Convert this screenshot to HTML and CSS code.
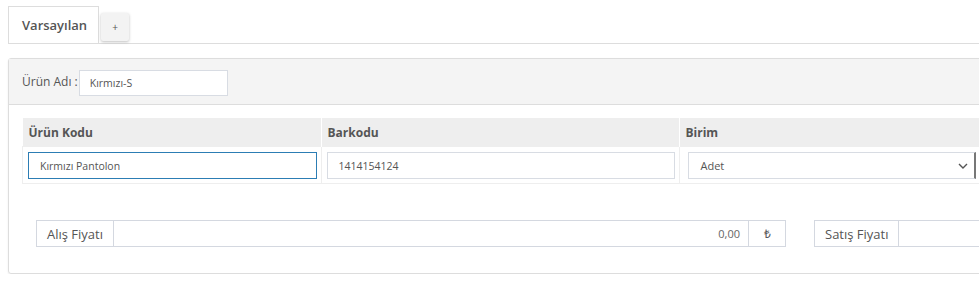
FILE: index.html
```html
<!DOCTYPE html>
<html lang="tr">
<head>
  <meta charset="UTF-8">
  <title>Ürün</title>
  <link rel="stylesheet" href="styles.css">
</head>
<body>

<div class="tabs">
  <div class="tab active">Varsayılan</div>
  <button class="tab-add">+</button>
</div>

<div class="panel">
  <div class="panel-head">
    <label class="name-label">Ürün Adı :</label>
    <input class="name-input" type="text" value="Kırmızı-S">
  </div>
  <div class="panel-body">
    <table class="variant-table">
      <tr>
        <th class="col-code">Ürün Kodu</th>
        <th class="col-barcode">Barkodu</th>
        <th class="col-unit">Birim</th>
      </tr>
      <tr>
        <td><input class="cell-input focused" type="text" value="Kırmızı Pantolon"></td>
        <td><input class="cell-input" type="text" value="1414154124"></td>
        <td>
          <div class="select">
            <span>Adet</span>
            <svg width="10" height="6" viewBox="0 0 10 6"><path d="M1 1l4 4 4-4" fill="none" stroke="#555" stroke-width="1.4"/></svg>
          </div>
        </td>
      </tr>
    </table>

    <div class="price-row">
      <div class="input-group buy">
        <span class="addon">Alış Fiyatı</span>
        <span class="price-input">0,00</span>
        <span class="addon currency">₺</span>
      </div>
      <div class="input-group sell">
        <span class="addon">Satış Fiyatı</span>
        <span class="price-input"></span>
      </div>
    </div>
  </div>
</div>

</body>
</html>
```

FILE: styles.css
```css
body {
  margin: 0;
  font-family: "Open Sans", sans-serif;
  color: #555;
  background: #fff;
  overflow: hidden;
}

.tabs {
  display: flex;
  align-items: flex-start;
  margin: 6px 0 0 8px;
  border-bottom: 1px solid #ddd;
  height: 37px;
}

.tab {
  height: 37px;
  box-sizing: border-box;
  padding: 9px 13px 0 13px;
  border: 1px solid #ddd;
  border-bottom: none;
  background: #fff;
  font-size: 13px;
  font-weight: 600;
  width: 91px;
}

.tab-add {
  margin: 7px 0 0 2px;
  width: 28px;
  height: 28px;
  border: none;
  border-radius: 2px;
  background: #f3f3f3;
  box-shadow: 0 1px 3px rgba(0, 0, 0, 0.25);
  font-family: "Open Sans", sans-serif;
  font-size: 10px;
  color: #555;
  padding: 0;
}

.panel {
  margin: 14px 0 0 8px;
  width: 1010px;
  border: 1px solid #ddd;
  border-radius: 3px;
  box-shadow: 0 1px 2px rgba(0, 0, 0, 0.08);
}

.panel-head {
  display: flex;
  align-items: center;
  height: 45px;
  background: #f4f4f4;
  border-bottom: 1px solid #ddd;
  padding-left: 13px;
}

.name-label {
  font-size: 12px;
  margin-right: 1px;
}

.name-input {
  width: 149px;
  height: 26px;
  box-sizing: border-box;
  border: 1px solid #d8dce3;
  padding: 0 10px;
  font-family: "Open Sans", sans-serif;
  font-size: 10.5px;
  color: #555;
  margin-top: 2px;
}

.panel-body {
  padding: 13px 0 26px 13px;
}

.variant-table {
  border-collapse: collapse;
  width: 965px;
}

.variant-table th {
  background: #eee;
  height: 28px;
  padding: 0 6px;
  text-align: left;
  font-size: 12px;
  font-weight: 700;
  color: #555;
  border-right: 1px solid #fff;
}

.col-code { width: 286px; }
.col-barcode { width: 345px; }

.variant-table td {
  border: 1px solid #eee;
  padding: 5px 4px 4px 5px;
  height: 27px;
}

.cell-input {
  width: 100%;
  height: 27px;
  box-sizing: border-box;
  border: 1px solid #d8dce3;
  padding: 0 11px;
  font-family: "Open Sans", sans-serif;
  font-size: 10.5px;
  color: #555;
}

.cell-input.focused {
  border-color: #2c7db4;
  outline: none;
}

.select {
  display: flex;
  align-items: center;
  justify-content: space-between;
  height: 27px;
  box-sizing: border-box;
  width: 288px;
  margin-left: 3px;
  border: 1px solid #d8dce3;
  border-right: 2px solid #777;
  padding: 0 6px 0 12px;
  font-size: 11px;
}

.price-row {
  display: flex;
  gap: 28px;
  margin-top: 36px;
  padding-left: 14px;
}

.input-group {
  display: flex;
  height: 27px;
  box-sizing: border-box;
  border: 1px solid #d4d8e0;
  font-size: 13px;
}

.input-group.buy { width: 750px; }
.input-group.sell { width: 200px; }

.addon {
  display: flex;
  align-items: center;
  padding: 0 10px;
  border-right: 1px solid #d4d8e0;
}

.addon.currency {
  border-right: none;
  border-left: 1px solid #d4d8e0;
  width: 37px;
  box-sizing: border-box;
  justify-content: center;
  font-size: 12px;
}

.price-input {
  flex: 1;
  display: flex;
  align-items: center;
  justify-content: flex-end;
  padding-right: 8px;
  font-size: 11px;
  color: #666;
}
```
